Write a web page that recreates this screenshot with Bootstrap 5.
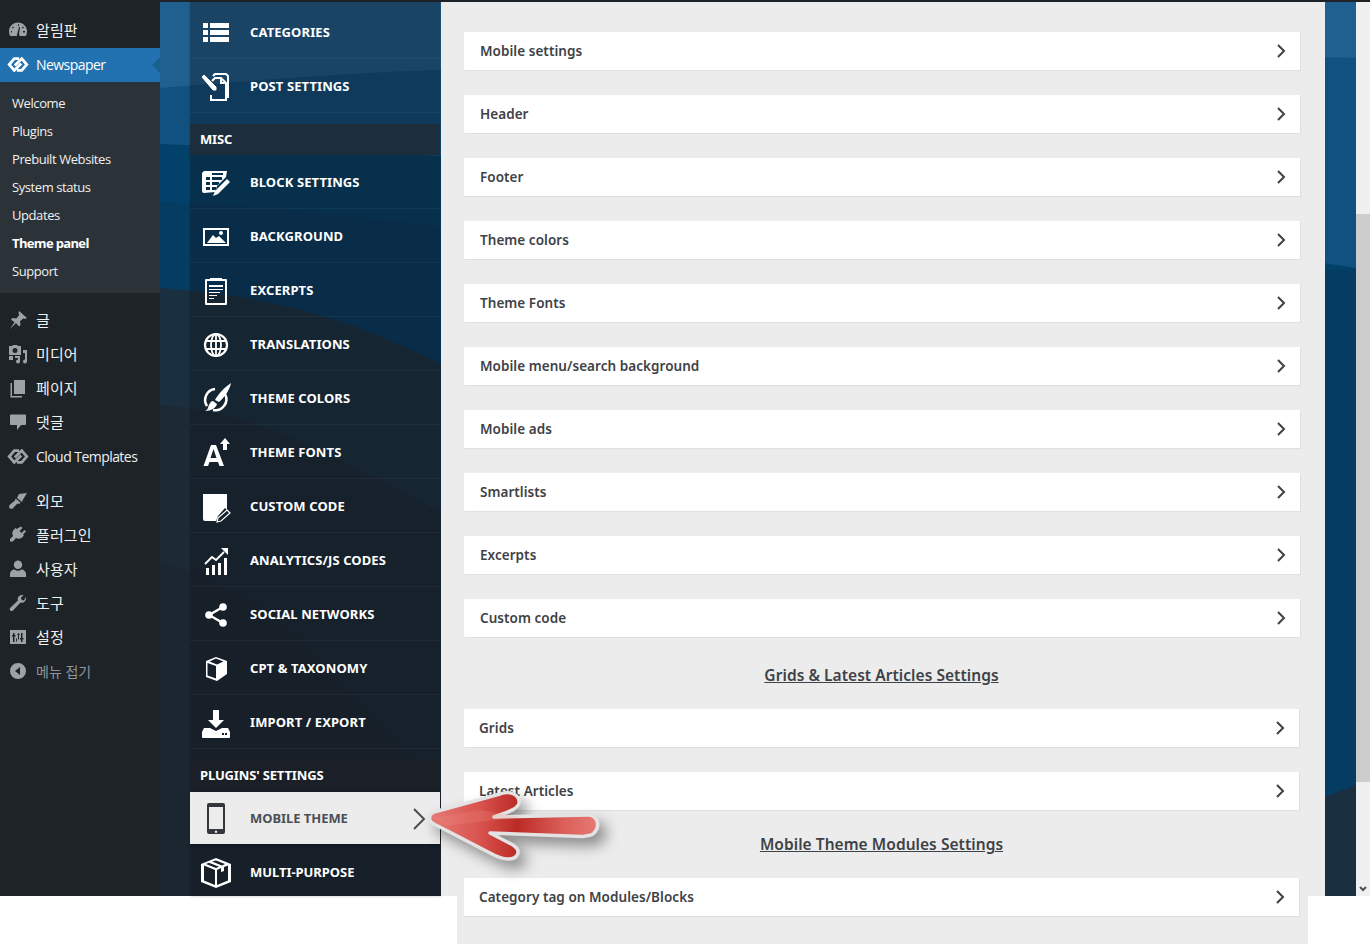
<!DOCTYPE html>
<html lang="ko">
<head>
<meta charset="utf-8">
<title>Newspaper theme panel</title>
<link href="https://cdn.jsdelivr.net/npm/bootstrap@5.3.0/dist/css/bootstrap.min.css" rel="stylesheet">
<style>
html,body{height:944px;overflow:hidden;background:#fff;}
body{position:relative;font-family:"Noto Sans","Noto Sans CJK KR",sans-serif;}
.stage{height:896px;border-top:2px solid #1d2327;position:relative;}
.wp-side{width:160px;height:894px;background:#1d2327;flex:none;font-family:"Open Sans","Noto Sans CJK KR",sans-serif;font-size:14px;letter-spacing:-.55px;color:#f0f0f1;overflow:hidden;}
.wp-link{height:34px;display:flex;align-items:center;color:#f0f0f1;text-decoration:none;}
.wp-ko{font-size:15px;letter-spacing:.1px;}
.wp-ico{width:36px;flex:none;display:flex;justify-content:center;}
.wp-ico svg{width:20px;height:20px;fill:#9da2a7;}
.wp-ico svg.chain{width:22px;height:15px;fill:none;stroke:#9da2a7;stroke-width:2.6;}
.wp-first{margin-top:12px;padding-bottom:2px;}
.wp-active{background:#2271b1;color:#fff;position:relative;padding-bottom:2px;}
.wp-active .wp-ico svg.chain{stroke:#fff;}
.wp-notch{position:absolute;right:0;top:9px;border:8px solid transparent;border-right-color:#17608f;border-left:0;}
.wp-sub{background:#2c3338;height:211px;padding:7px 0 0 12px;font-size:13px;letter-spacing:-.42px;}
.wp-sub a{display:block;height:28px;line-height:28px;color:#a7aaad;text-decoration:none;}
.wp-sub a.on{color:#fff;font-weight:700;letter-spacing:-.65px;}
.wp-gap-top{margin-top:10px;}
.wp-gap-mid{margin-top:11px;}
.wp-muted{color:#8f959a;}
.wp-muted .wp-ko{font-size:14px;letter-spacing:0;}
.wp-muted svg{fill:#9da2a7;}
.canvas{flex:1;position:relative;display:flex;overflow:visible;min-width:0;}
.waves{position:absolute;left:0;top:0;width:1196px;height:894px;}
.td-menu{position:relative;margin-left:30px;width:250px;height:894px;background:rgba(18,20,28,.36);box-shadow:1px 0 3px rgba(0,0,0,.25);overflow:hidden;font-family:"Noto Sans",sans-serif;}
.td-item{height:54px;display:flex;align-items:center;padding-top:3px;border-bottom:1px solid rgba(255,255,255,.045);color:#fff;font-size:13px;font-weight:700;text-decoration:none;letter-spacing:.1px;}
.td-item.first{height:57px;padding-top:6px;}
.td-ic{width:60px;flex:none;display:flex;justify-content:center;padding-right:8px;margin-top:-1px;}
.td-ic svg{width:32px;height:32px;fill:#fff;}
.td-ic svg.ln{fill:none;stroke:#fff;stroke-width:2;}
.td-head{height:31px;display:flex;align-items:center;padding-left:10px;color:#fff;font-size:13px;font-weight:700;letter-spacing:-.15px;}
.td-misc{background:#1c2e3b;margin-top:11px;}
.td-plug{background:#1b2028;margin-top:11px;height:32px;}
.td-on{height:52px;padding-top:1px;background:#ececec;color:#4a4f55;border:0;margin-bottom:2px;letter-spacing:-.05px;box-shadow:0 1px 3px rgba(0,0,0,.35);}
.td-on .td-ic svg{fill:#33363a;}
.td-last{border:0;padding-top:0;letter-spacing:-.05px;}
.td-chev{margin-left:auto;margin-right:14px;width:14px;height:22px;}
.td-body{position:relative;margin-left:1px;width:884px;height:894px;background:#ececec;padding:30px 25px 0 23px;font-family:"Noto Sans",sans-serif;color:#3e4246;z-index:2;}
.row-stack{display:flex;flex-direction:column;gap:25px;}
.set-row{height:38px;background:#fff;display:flex;align-items:center;justify-content:space-between;padding:0 14px 0 16px;font-size:13.5px;font-weight:600;letter-spacing:.05px;box-shadow:1px 1px 1px rgba(0,0,0,.05);}
.set-row svg{width:10px;height:14px;}
.stack-b{margin-right:1px;}
.stack-b .set-row{padding-left:15px;}
.sec-title{display:flex;align-items:center;justify-content:center;font-size:15.5px;font-weight:600;text-decoration:underline;color:#3e4246;letter-spacing:.05px;margin-right:1px;}
.sec-one{height:72px;padding-top:6px;}
.sec-two{height:68px;padding-top:2px;}
.sbar{width:14px;height:894px;position:relative;background:#f0f0f0;flex:none;z-index:3;margin-left:auto;}
.sthumb{height:568px;margin-top:212px;background:#cdcdcd;}
.sdown{position:absolute;left:3px;bottom:4px;width:8px;height:6px;}
.foot-strip{height:48px;margin-left:457px;width:851px;background:#ececec;}
.pointer{position:absolute;left:420px;top:780px;width:195px;height:90px;z-index:5;filter:drop-shadow(7px 8px 7px rgba(0,0,0,.4));}
</style>
</head>
<body>
<div class="stage d-flex">
  <nav class="wp-side">
    <a class="wp-link wp-first"><span class="wp-ico"><svg viewBox="0 0 20 20"><path d="M10 2.500C4.800 2.500 1 6.500 1 11.500c0 1.700.4 3.100 1.100 4.500h15.800c.7-1.400 1.100-2.800 1.100-4.500 0-5-3.800-9-9-9zM4 12.500H3V11h1zm2-5-1 1-1-1 1-1zm3.300 6.600L11 7h1l-1 7.300c.5.400.8 1 .3 1.700H9c-.4-.7 0-1.500.3-1.900zM10 4.300h1V6h-1zm6 8.200h-1V11h2v1.500zm-1-4-1-1 1-1 1 1z"/></svg></span><span class="wp-ko">알림판</span></a>
    <a class="wp-link wp-active"><span class="wp-ico"><svg class="chain" viewBox="0 0 20 14"><path d="M11 1.500H6.500L1.800 7l4.700 5.500L13 6"/><path d="M9 12.500h4.500L18.200 7l-4.700-5.500L7 8"/></svg></span>Newspaper<span class="wp-notch"></span></a>
    <div class="wp-sub">
      <a>Welcome</a><a>Plugins</a><a>Prebuilt Websites</a><a>System status</a><a>Updates</a><a class="on">Theme panel</a><a>Support</a>
    </div>
    <a class="wp-link wp-gap-top"><span class="wp-ico"><svg viewBox="0 0 20 20"><path d="M11 1l8 7-2 1-1.500-.8-3.500 3 .5 3.800-1.500 1.500-3-3.500L2 19l4.500-6.800L3 9.500 4.500 8l3.800.5 3-3.500L10.500 3z"/></svg></span><span class="wp-ko">글</span></a>
    <a class="wp-link"><span class="wp-ico"><svg viewBox="0 0 20 20"><path fill-rule="evenodd" d="M1 2h3l1-1h4l1 1h3v9H1zm6 2a2.500 2.500 0 100 5 2.500 2.500 0 000-5z"/><path d="M15 6h4v11.500a2 2 0 11-2-2V9h-2zM7 12h5v5.500a2 2 0 11-2-2V14H7zM1 12h4v4H1z"/></svg></span><span class="wp-ko">미디어</span></a>
    <a class="wp-link"><span class="wp-ico"><svg viewBox="0 0 20 20"><path d="M6 2h11v14H6zM4 5v13h10v1.500H2.500V5z"/></svg></span><span class="wp-ko">페이지</span></a>
    <a class="wp-link"><span class="wp-ico"><svg viewBox="0 0 20 20"><path d="M3 2.500h14a1 1 0 011 1V12a1 1 0 01-1 1h-4l-4 5v-5H3a1 1 0 01-1-1V3.500a1 1 0 011-1z"/></svg></span><span class="wp-ko">댓글</span></a>
    <a class="wp-link"><span class="wp-ico"><svg class="chain" viewBox="0 0 20 14"><path d="M11 1.500H6.500L1.800 7l4.700 5.500L13 6"/><path d="M9 12.500h4.500L18.200 7l-4.700-5.500L7 8"/></svg></span>Cloud Templates</a>
    <a class="wp-link wp-gap-mid"><span class="wp-ico"><svg viewBox="0 0 20 20"><path d="M11 3l8-1-3 5-1 1.500-1 2.500-5-4zM7.500 7.500l5 4-1.500 1.500-1.500-.5L4 18l-3-1 .5-3 5.500-4.500z"/></svg></span><span class="wp-ko">외모</span></a>
    <a class="wp-link"><span class="wp-ico"><svg viewBox="0 0 20 20"><path d="M13 1.500l1.500 1.500-3 3 2 2 3-3 1.500 1.500-3 3 1 1-2 2c-2 1.500-4 1.500-6 .5l-3 3.500H2v-2.500l3-3c-1-2-1-4 .5-6l2-2 1 1z"/></svg></span><span class="wp-ko">플러그인</span></a>
    <a class="wp-link"><span class="wp-ico"><svg viewBox="0 0 20 20"><path d="M10 1.500a4 4 0 110 8.500 4 4 0 010-8.500zM2 18v-3c0-2.500 2.500-4.500 4.500-4.500 1 .8 2.200 1.200 3.500 1.200s2.500-.4 3.500-1.200c2 0 4.500 2 4.500 4.500v3z"/></svg></span><span class="wp-ko">사용자</span></a>
    <a class="wp-link"><span class="wp-ico"><svg viewBox="0 0 20 20"><path d="M18 5.500c0 2.800-2.800 5-5.500 4L5 17.500c-.8.800-2 .8-2.700 0-.8-.7-.8-1.900 0-2.700L10 7.500C9 4.800 11.200 2 14 2c.5 0 1 .1 1.500.3L12.800 5l1 2 2.200.5L17.700 4c.2.500.3 1 .3 1.500z"/></svg></span><span class="wp-ko">도구</span></a>
    <a class="wp-link"><span class="wp-ico"><svg viewBox="0 0 20 20"><path fill-rule="evenodd" d="M2 3h16v14H2zM5 6v2H4v1.500h1V15h1.500V9.500h1V8h-1V6zm8 0v5h-1v1.500h1V15h1.500v-2.500h1V11h-1V6zM9 8l1.500-2L12 8h-1v4.500H10V8zm-1 3.500h1v3H8z"/></svg></span><span class="wp-ko">설정</span></a>
    <a class="wp-link wp-muted"><span class="wp-ico"><svg viewBox="0 0 20 20"><path fill-rule="evenodd" d="M10 2a8 8 0 110 16 8 8 0 010-16zm2 4L7 10l5 4z"/></svg></span><span class="wp-ko">메뉴 접기</span></a>
  </nav>
  <div class="canvas">
    <svg class="waves" viewBox="0 0 1196 894" preserveAspectRatio="none" aria-hidden="true">
      <rect width="1196" height="894" fill="#10517f"/>
      <path d="M0 26C300 40 900 40 1196 56V0H0z" fill="#10517f"/>
      <path d="M0 86C200 70 320 60 560 72 800 90 1100 50 1196 56V0H0z" fill="#1f6090"/>
      <path d="M0 142C150 148 240 150 440 165L900 220 1196 266V894H0z" fill="#024169"/>
      <path d="M0 200C120 204 240 215 440 250L1196 268V894H0z" fill="#053c62"/>
      <path d="M0 286C90 292 180 310 280 362 500 500 800 820 1165 795L1196 783V894H0z" fill="#1a2f3f"/>
      <path d="M0 403C80 408 150 440 280 510L700 894H0z" fill="#1c2a36"/>
      <path d="M0 560C50 575 100 600 140 640L280 790 340 894H0z" fill="#1c2630"/>
    </svg>
    <aside class="td-menu">
      <a class="td-item first"><span class="td-ic"><svg viewBox="0 0 32 32"><path d="M3 6h5v5H3zm7 0h19v5H10zM3 13h5v5H3zm7 0h19v5H10zM3 20h5v5H3zm7 0h19v5H10z"/></svg></span>CATEGORIES</a>
      <a class="td-item"><span class="td-ic"><svg class="ln" viewBox="0 0 32 32"><path d="M13 5l2-2h11l2 2v21h-2"/><path d="M12 10l3-3h6l5 5v17H11v-5"/><path d="M21 7v5h5"/><path d="M2 6l2-2 12 12v3h-3z" fill="#fff" stroke-width="1"/></svg></span>POST SETTINGS</a>
      <div class="td-head td-misc">MISC</div>
      <a class="td-item"><span class="td-ic"><svg viewBox="0 0 32 32"><path fill-rule="evenodd" d="M4 4h23l-1 6-6 6-3 3-2 6-11 1a2 2 0 01-2-2V6zm2 6v3h4v-3zm0 5v3h4v-3zm0 5v3h4v-3zm6-10v3h10v-3zm0 5v3h7v-3zm0 5v3h4v-3zM12 6v2h11V6z"/><path d="M27 12l3 3-12 12-5 2 2-5z"/></svg></span>BLOCK SETTINGS</a>
      <a class="td-item"><span class="td-ic"><svg viewBox="0 0 32 32"><path fill-rule="evenodd" d="M3 7h26v18H3zm2 2v14h22V9z"/><path d="M7 22l6-8 3 3 3-2 7 7z"/><circle cx="21" cy="12" r="2"/></svg></span>BACKGROUND</a>
      <a class="td-item"><span class="td-ic"><svg viewBox="0 0 32 32"><path fill-rule="evenodd" d="M6 4h4V3h12v1h4a1 1 0 011 1v24a1 1 0 01-1 1H6a1 1 0 01-1-1V5a1 1 0 011-1zm1 2v22h18V6z"/><path d="M9 10h14v2H9zm0 4h14v1H9zm0 3h11v1H9zm0 3h8v1H9zm0 3h5v1H9z"/></svg></span>EXCERPTS</a>
      <a class="td-item"><span class="td-ic"><svg viewBox="0 0 32 32" fill="none"><circle cx="16" cy="16" r="11" fill="none" stroke="#fff" stroke-width="2.200"/><ellipse cx="16" cy="16" rx="5" ry="11" fill="none" stroke="#fff" stroke-width="1.800"/><path d="M5 12h22M5 20h22M16 5v22" stroke="#fff" stroke-width="1.800"/></svg></span>TRANSLATIONS</a>
      <a class="td-item"><span class="td-ic"><svg viewBox="0 0 32 32"><path d="M31 0c-1 6-6 14-12 19l-4-2c3-6 10-13 16-17z"/><path d="M13 18l4 3c-1 4-6 7-12 7 3-1 3-4 4-6 1-2 2-4 4-4z"/><path d="M15 6A11 11 0 0 0 7 23" fill="none" stroke="#fff" stroke-width="2.500"/><path d="M25 11A11 11 0 0 1 13 27" fill="none" stroke="#fff" stroke-width="2.500"/></svg></span>THEME COLORS</a>
      <a class="td-item"><span class="td-ic"><svg viewBox="0 0 32 32"><path fill-rule="evenodd" d="M11 8h5l8 21h-4.500l-1.500-4H9.500L8 29H3.500zm2.500 4l-3 9h6z"/><path d="M25 1l5 6h-3v6h-4V7h-3z"/></svg></span>THEME FONTS</a>
      <a class="td-item"><span class="td-ic"><svg viewBox="0 0 32 32"><path d="M3 3h24v16l-2-2-7 8-2 5H5a2 2 0 01-2-2z"/><path d="M27 19l3 3-9 8-4 1 1-4z" stroke="#fff" fill="none" stroke-width="1.200"/></svg></span>CUSTOM CODE</a>
      <a class="td-item"><span class="td-ic"><svg viewBox="0 0 32 32"><path d="M6 23h3v7H6zm6-3h3v10h-3zm6-2h3v12h-3zm6-5h3v17h-3z"/><path d="M5 19l7-7 4 3 8-8" fill="none" stroke="#fff" stroke-width="1.800"/><path d="M21 3h7v7z"/></svg></span>ANALYTICS/JS CODES</a>
      <a class="td-item"><span class="td-ic"><svg viewBox="0 0 32 32"><circle cx="9" cy="16" r="3.800"/><circle cx="23" cy="8" r="3.800"/><circle cx="23" cy="24" r="3.800"/><path d="M9 16L23 8M9 16l14 8" stroke="#fff" stroke-width="2.400"/></svg></span>SOCIAL NETWORKS</a>
      <a class="td-item"><span class="td-ic"><svg viewBox="0 0 32 32"><path fill-rule="evenodd" d="M16 4l11 4v13l-10 7-11-4V8zM9.500 8.500l7.500 3 6.500-3-7.500-3zM7.500 10v12.500l8.500 3V13z"/></svg></span>CPT &amp; TAXONOMY</a>
      <a class="td-item"><span class="td-ic"><svg viewBox="0 0 32 32"><path d="M13 3h6v10h5l-8 8-8-8h5z"/><path fill-rule="evenodd" d="M4 21h6l6 3 6-3h6l2 4v5a1 1 0 01-1 1H3a1 1 0 01-1-1v-5zm18 5v2h2v-2zm3 0v2h2v-2z"/></svg></span>IMPORT / EXPORT</a>
      <div class="td-head td-plug">PLUGINS' SETTINGS</div>
      <a class="td-item td-on"><span class="td-ic"><svg viewBox="0 0 32 32"><path fill-rule="evenodd" d="M9 1h14a2 2 0 012 2v27a2 2 0 01-2 2H9a2 2 0 01-2-2V3a2 2 0 012-2zm0 4v22h14V5zm7 23.500a1.200 1.200 0 100 2.400 1.200 1.200 0 000-2.400z"/></svg></span>MOBILE THEME<svg class="td-chev" viewBox="0 0 14 22" fill="none"><path d="M2 1l10 10L2 21" stroke="#4a4f55" stroke-width="2"/></svg></a>
      <a class="td-item td-last"><span class="td-ic"><svg viewBox="0 0 32 32"><path fill-rule="evenodd" d="M16 1l15 6v18l-15 6-15-6V7zM4 8.500v15l11 4.500V13zm13 4.500v15l11-4.500v-15l-4 1.500v4l-3 1v-4zM6 7l10 4 3-1.200L9 5.800zm6-2.500l10 4 3-1.500-9-3.500z"/></svg></span>MULTI-PURPOSE</a>
    </aside>
    <main class="td-body">
      <div class="row-stack">
        <div class="set-row">Mobile settings<svg viewBox="0 0 10 14" fill="none"><path d="M2 1l6 6-6 6" stroke="#3e4246" stroke-width="2"/></svg></div>
        <div class="set-row">Header<svg viewBox="0 0 10 14" fill="none"><path d="M2 1l6 6-6 6" stroke="#3e4246" stroke-width="2"/></svg></div>
        <div class="set-row">Footer<svg viewBox="0 0 10 14" fill="none"><path d="M2 1l6 6-6 6" stroke="#3e4246" stroke-width="2"/></svg></div>
        <div class="set-row">Theme colors<svg viewBox="0 0 10 14" fill="none"><path d="M2 1l6 6-6 6" stroke="#3e4246" stroke-width="2"/></svg></div>
        <div class="set-row">Theme Fonts<svg viewBox="0 0 10 14" fill="none"><path d="M2 1l6 6-6 6" stroke="#3e4246" stroke-width="2"/></svg></div>
        <div class="set-row">Mobile menu/search background<svg viewBox="0 0 10 14" fill="none"><path d="M2 1l6 6-6 6" stroke="#3e4246" stroke-width="2"/></svg></div>
        <div class="set-row">Mobile ads<svg viewBox="0 0 10 14" fill="none"><path d="M2 1l6 6-6 6" stroke="#3e4246" stroke-width="2"/></svg></div>
        <div class="set-row">Smartlists<svg viewBox="0 0 10 14" fill="none"><path d="M2 1l6 6-6 6" stroke="#3e4246" stroke-width="2"/></svg></div>
        <div class="set-row">Excerpts<svg viewBox="0 0 10 14" fill="none"><path d="M2 1l6 6-6 6" stroke="#3e4246" stroke-width="2"/></svg></div>
        <div class="set-row">Custom code<svg viewBox="0 0 10 14" fill="none"><path d="M2 1l6 6-6 6" stroke="#3e4246" stroke-width="2"/></svg></div>
      </div>
      <div class="sec-title sec-one">Grids &amp; Latest Articles Settings</div>
      <div class="row-stack stack-b">
        <div class="set-row">Grids<svg viewBox="0 0 10 14" fill="none"><path d="M2 1l6 6-6 6" stroke="#3e4246" stroke-width="2"/></svg></div>
        <div class="set-row">Latest Articles<svg viewBox="0 0 10 14" fill="none"><path d="M2 1l6 6-6 6" stroke="#3e4246" stroke-width="2"/></svg></div>
      </div>
      <div class="sec-title sec-two">Mobile Theme Modules Settings</div>
      <div class="row-stack stack-b">
        <div class="set-row">Category tag on Modules/Blocks<svg viewBox="0 0 10 14" fill="none"><path d="M2 1l6 6-6 6" stroke="#3e4246" stroke-width="2"/></svg></div>
      </div>
    </main>
    <div class="sbar"><div class="sthumb"></div><svg class="sdown" viewBox="0 0 8 6" fill="none"><path d="M1 1l3 3 3-3" stroke="#505050" stroke-width="2"/></svg></div>
  </div>
</div>
<div class="foot-strip"></div>
<svg class="pointer" viewBox="420 780 195 90" aria-hidden="true">
  <defs>
    <linearGradient id="shaft" x1="0" y1="0" x2="1" y2="0">
      <stop offset="0" stop-color="#e67a75"/>
      <stop offset=".3" stop-color="#d9534e"/>
      <stop offset=".52" stop-color="#bb2b26"/>
      <stop offset=".8" stop-color="#dc5f5a"/>
      <stop offset="1" stop-color="#e67a75"/>
    </linearGradient>
  </defs>
  <path d="M434 812L500 794C510 790 520 795 519 803 518 808 512 811 494 817L588 815C598 815 601 827 593 834 590 836 586 836 582 836.500L490 833 513 845C522 851 518 859 508 859 503 859 497 857 490 853L434 824C428 821 428 815 434 812Z" fill="url(#shaft)" stroke="#e3e3e3" stroke-width="3.500" stroke-linejoin="round"/>
  <path d="M434 818L480 810 520 817 445 826z" fill="#f0908a" opacity=".22"/>
</svg>
</body>
</html>
